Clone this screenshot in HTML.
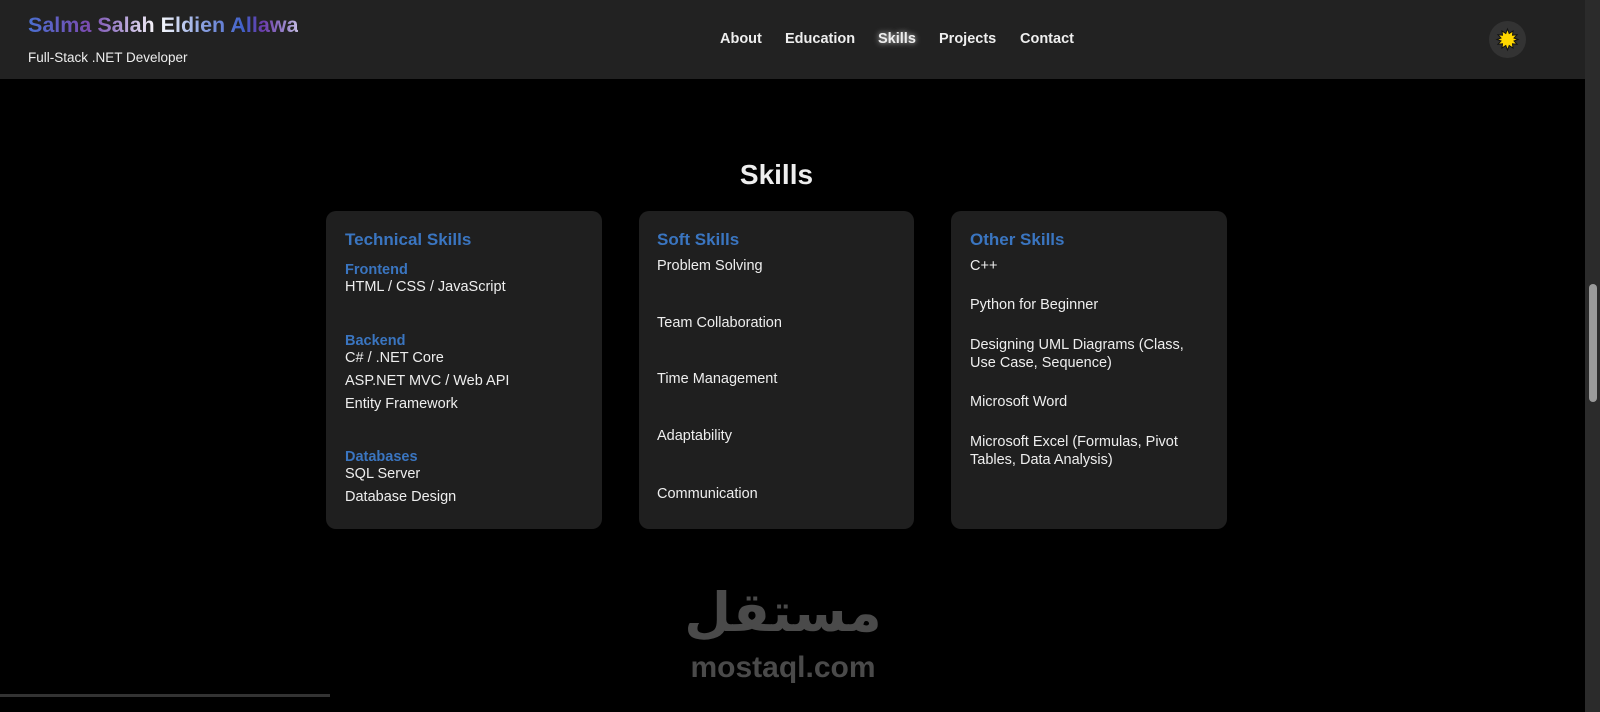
<!DOCTYPE html>
<html><head><meta charset="utf-8"><style>
*{margin:0;padding:0;box-sizing:border-box}
body{width:1600px;height:712px;background:#000;font-family:"Liberation Sans",Arial,sans-serif;position:relative;overflow:hidden;color:#eee}
.hdr{position:absolute;left:0;top:0;width:1585px;height:79px;background:#222}
.name{position:absolute;left:28px;top:13px;font-size:21.5px;font-weight:bold;background:linear-gradient(90deg,#4a6fd0 0,#7a4bb0 60px,#9a7fc8 85px,#fff 130px,#8aa0e0 175px,#4060c8 215px,#6a3aa8 235px,#a090d0 260px,#fff 285px);-webkit-background-clip:text;background-clip:text;color:transparent;white-space:nowrap}
.sub{position:absolute;left:28px;top:50px;font-size:13.5px;color:#eee}
.nav{position:absolute;top:31px;font-size:14.5px;font-weight:bold;color:#eee}
.sk{text-shadow:0 0 6px rgba(255,255,255,.8)}
.btn{position:absolute;left:1489px;top:21px;width:37px;height:37px;border-radius:50%;background:#333}
.sb{position:absolute;left:1585px;top:0;width:15px;height:712px;background:#2b2b2b}
.thumb{position:absolute;left:1589px;top:284px;width:8px;height:118px;border-radius:4px;background:#9a9a9a}
h2{position:absolute;left:0;width:1553px;text-align:center;top:159px;font-size:28px;color:#eee}
.card{position:absolute;top:211px;height:318px;background:#1f1f1f;border-radius:10px}
.t{position:absolute;font-size:17px;font-weight:bold;color:#3a75c0}
.c{position:absolute;font-size:14.5px;font-weight:bold;color:#3a75c0}
.i{position:absolute;font-size:14.5px;color:#eee;line-height:18px}
.logo{position:absolute;left:0;width:1566px;text-align:center;color:#4a4a4a;font-weight:bold}
</style></head><body>
<div class="hdr">
<div class="name">Salma Salah Eldien Allawa</div>
<div class="sub">Full-Stack .NET Developer</div>
<div class="nav" style="left:720px">About</div>
<div class="nav" style="left:785px">Education</div>
<div class="nav sk" style="left:878px">Skills</div>
<div class="nav" style="left:939px">Projects</div>
<div class="nav" style="left:1020px">Contact</div>
<div class="btn"><svg width="37" height="37" viewBox="0 0 37 37"><polygon points="18.5,8 20.2,12.5 24,10 23.5,14.2 28,13.8 25,17 29,18.5 25,20 28,23.2 23.5,22.8 24,27 20.2,24.5 18.5,29 16.8,24.5 13,27 13.5,22.8 9,23.2 12,20 8,18.5 12,17 9,13.8 13.5,14.2 13,10 16.8,12.5" fill="#ffd700" stroke="#111" stroke-width="1"/></svg></div>
</div>
<div class="sb"></div><div class="thumb"></div>
<h2>Skills</h2>
<div class="card" style="left:326px;width:276px"></div>
<div class="card" style="left:639px;width:275px"></div>
<div class="card" style="left:951px;width:276px"></div>
<div class="t" style="left:345px;top:230px">Technical Skills</div>
<div class="c" style="left:345px;top:262px">Frontend</div>
<div class="i" style="left:345px;top:278px">HTML / CSS / JavaScript</div>
<div class="c" style="left:345px;top:333px">Backend</div>
<div class="i" style="left:345px;top:349px">C# / .NET Core</div>
<div class="i" style="left:345px;top:372px">ASP.NET MVC / Web API</div>
<div class="i" style="left:345px;top:395px">Entity Framework</div>
<div class="c" style="left:345px;top:449px">Databases</div>
<div class="i" style="left:345px;top:465px">SQL Server</div>
<div class="i" style="left:345px;top:488px">Database Design</div>
<div class="t" style="left:657px;top:230px">Soft Skills</div>
<div class="i" style="left:657px;top:257px">Problem Solving</div>
<div class="i" style="left:657px;top:314px">Team Collaboration</div>
<div class="i" style="left:657px;top:370px">Time Management</div>
<div class="i" style="left:657px;top:427px">Adaptability</div>
<div class="i" style="left:657px;top:485px">Communication</div>
<div class="t" style="left:970px;top:230px">Other Skills</div>
<div class="i" style="left:970px;top:257px">C++</div>
<div class="i" style="left:970px;top:296px">Python for Beginner</div>
<div class="i" style="left:970px;top:336px">Designing UML Diagrams (Class,<br>Use Case, Sequence)</div>
<div class="i" style="left:970px;top:393px">Microsoft Word</div>
<div class="i" style="left:970px;top:433px">Microsoft Excel (Formulas, Pivot<br>Tables, Data Analysis)</div>
<div class="logo" style="top:578px;font-size:54px;font-family:'DejaVu Sans',sans-serif;line-height:70px">مستقل</div>
<div class="logo" style="top:650px;font-size:30px;line-height:36px">mostaql.com</div>
<div style="position:absolute;left:0;top:694px;width:330px;height:3px;background:#333"></div>
</body></html>
